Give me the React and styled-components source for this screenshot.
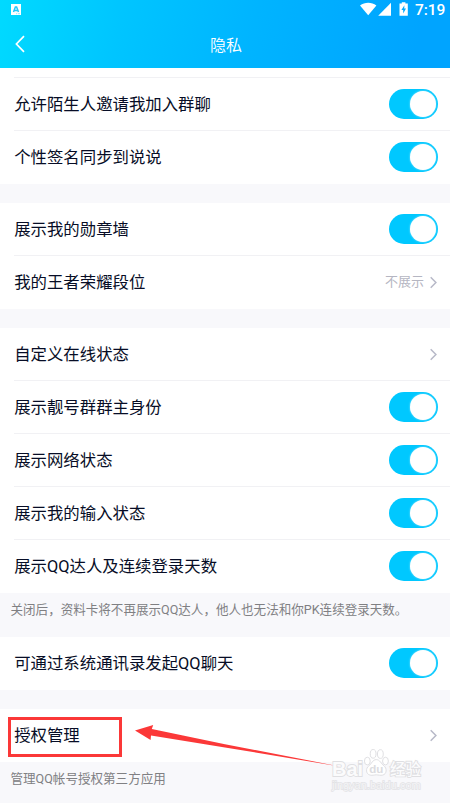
import React from 'react'
import styled, { createGlobalStyle } from 'styled-components'

const groups = [
    {
        continued: true,
        rows: [
            { label: '允许陌生人邀请我加入群聊', toggle: true },
            { label: '个性签名同步到说说', toggle: true },
        ],
    },
    {
        rows: [
            { label: '展示我的勋章墙', toggle: true },
            { label: '我的王者荣耀段位', value: '不展示' },
        ],
    },
    {
        rows: [
            { label: '自定义在线状态' },
            { label: '展示靓号群群主身份', toggle: true },
            { label: '展示网络状态', toggle: true },
            { label: '展示我的输入状态', toggle: true },
            { label: '展示QQ达人及连续登录天数', toggle: true },
        ],
        note: '关闭后，资料卡将不再展示QQ达人，他人也无法和你PK连续登录天数。',
    },
    { rows: [{ label: '可通过系统通讯录发起QQ聊天', toggle: true }] },
    {
        rows: [{ label: '授权管理', marked: true }],
        note: '管理QQ帐号授权第三方应用',
    },
]

function App() {
    return (
        <Container>
            <GlobalStyle />
            <Header>
                <StatusBar>
                    <svg width="10" height="11" viewBox="0 0 10 11">
                        <path d="M0 0h10v11H0z" fill="#fff" />
                        <path d="M2.5 8 4.4 3h1.2l1.9 5M3.4 6.4h3.2" fill="none" stroke="#22c8fa" strokeWidth="1.5" />
                        <path d="M5 9.7h1.2M7 9.7h2" stroke="#6bdcfc" strokeWidth=".7" />
                    </svg>
                    <StatusIcons>
                        <svg width="49" height="15" viewBox="0 0 49 15" fill="#fff">
                            <path d="M0 4.4C4.8.9 11.6.9 16.4 4.4L8.2 14.3z" />
                            <path d="M31 1.7V14.7H18.2z" />
                            <path d="M39.5 2.4h2.3V1.3h3.6v1.1h2.4v12.3h-8.3z" />
                            <path d="M44.4 4.2 41.4 9h1.8v3.4l2.8-5h-1.8z" fill="#00a9ff" />
                        </svg>
                        <Time>7:19</Time>
                    </StatusIcons>
                </StatusBar>
                <TitleBar>
                    <svg width="11" height="18" viewBox="0 0 11 18">
                        <path d="M10 1.2 2.4 9 10 16.8" fill="none" stroke="#fff" strokeWidth="1.7" />
                    </svg>
                    <Title>隐私</Title>
                </TitleBar>
            </Header>
            <main>
                {groups.map((group, i) => (
                    <React.Fragment key={i}>
                        <Group $continued={group.continued}>
                            {group.rows.map((row) => (
                                <Row key={row.label}>
                                    <Label>
                                        {row.label}
                                        {row.marked && <Marker />}
                                    </Label>
                                    {row.toggle ? (
                                        <Toggle><Knob /></Toggle>
                                    ) : (
                                        <Detail>
                                            <Value>{row.value}</Value>
                                            <svg width="9" height="13" viewBox="0 0 9 13">
                                                <path d="m1.7 1.3 5.2 5.2-5.2 5.2" fill="none" stroke="#b7b9c8" strokeWidth="1.5" />
                                            </svg>
                                        </Detail>
                                    )}
                                </Row>
                            ))}
                        </Group>
                        {group.note ? <Note>{group.note}</Note> : <Gap />}
                    </React.Fragment>
                ))}
            </main>
            <Arrow width="210" height="50" viewBox="0 0 210 50">
                <path d="M0 10.5 18.2 5 16.8 9 90 24.2 206 46.7 90 27.4 16 15.6 15.6 20z" fill="#fb3838" />
            </Arrow>
            <Watermark>
                <Brand>
                    <BrandText>Bai</BrandText>
                    <svg width="27" height="30" viewBox="0 0 28 30" fill="#fff" stroke="#dedee1" strokeWidth="1">
                        <ellipse cx="4.5" cy="13" rx="3" ry="4" />
                        <ellipse cx="10.5" cy="5.5" rx="3" ry="4.5" />
                        <ellipse cx="18" cy="5.7" rx="3" ry="4.5" />
                        <ellipse cx="23.3" cy="13" rx="3" ry="4" />
                        <path d="M13.8 11.5c-4 0-4.6 4.2-7.7 6.4-3.5 2.5-3.4 8.7 1.4 9.7 2.2.5 4.1-.3 6.3-.3s4.3.8 6.5.3c4.6-1 4.8-7.2 1.3-9.8-3.2-2.2-3.8-6.3-7.8-6.3z" />
                        <text x="6.5" y="25" fontFamily="Liberation Sans, sans-serif" fontSize="12" fontWeight="700" fill="#dcdce0" stroke="none">du</text>
                    </svg>
                    <BrandText $chinese>经验</BrandText>
                </Brand>
                <Site>jingyan.baidu.com</Site>
            </Watermark>
        </Container>
    )
}

export default App

const GlobalStyle = createGlobalStyle`
    body {
        margin: 0;
        background: #f8f8fb;
    }
    * {
        box-sizing: border-box;
    }
    svg {
        display: block;
        flex: none;
    }
`

const Container = styled.div`
    position: relative;
    height: 803px;
    overflow: hidden;
    background: #f8f8fb;
    color: #070d26;
    font-family: Roboto, "Noto Sans CJK SC", sans-serif;
`

const Header = styled.header`
    height: 68px;
    color: #fff;
    background: linear-gradient(102deg, #00daff 0%, #00c5ff 27%, #00b4ff 56%, #00a4ff 92%);
`

const StatusBar = styled.div`
    display: flex;
    justify-content: space-between;
    height: 20px;
    padding: 4px 5px 0 11px;
`

const StatusIcons = styled.div`
    display: flex;
    gap: 6px;
    margin-top: -3px;
`

const Time = styled.span`
    font-size: 15.5px;
    line-height: 18px;
    width: 30px;
    white-space: nowrap;
    font-weight: 500;
    letter-spacing: -0.1px;
`

const TitleBar = styled.div`
    display: flex;
    align-items: center;
    height: 48px;
    padding: 0 23px 0 14px;
`

const Title = styled.h1`
    flex: 1;
    margin: 0;
    padding-bottom: 1px;
    font-size: 16px;
    font-weight: 350;
    text-align: center;
`

const Group = styled.section`
    background: #fff;
    ${({ $continued }) => $continued && `
        &::before {
            content: '';
            display: block;
            height: 9px;
            margin-left: 14px;
            border-bottom: 1px solid #f1f1f4;
        }
    `}
`

const Row = styled.div`
    display: flex;
    align-items: center;
    justify-content: space-between;
    height: 53px;
    margin-left: 14px;
    padding-right: 12px;
    border-bottom: 1px solid #f1f1f4;

    &:last-child {
        border-bottom-color: transparent;
    }
`

const Label = styled.span`
    position: relative;
    padding: 2px 0 0 0.2px;
    font-size: 16.4px;
    line-height: 24px;
    white-space: nowrap;
`

const Marker = styled.span`
    position: absolute;
    left: -6px;
    top: -5px;
    width: 114px;
    height: 40px;
    border: 3px solid #fb3838;
`

const Toggle = styled.span`
    display: flex;
    align-items: center;
    justify-content: flex-end;
    width: 49px;
    height: 30px;
    padding-right: 2px;
    border-radius: 15px;
    background: #00c8ff;
`

const Knob = styled.span`
    width: 26px;
    height: 26px;
    border-radius: 50%;
    background: #fff;
    box-shadow: 0 0 2px rgba(255, 255, 255, 0.6);
`

const Detail = styled.span`
    display: flex;
    align-items: center;
    gap: 5px;
`

const Value = styled.span`
    font-size: 13px;
    line-height: 18px;
    color: #b5b6c2;
`

const Gap = styled.div`
    height: 19px;
`

const Note = styled.p`
    height: 44px;
    margin: 0;
    padding: 7px 0 0 10.5px;
    font-size: 12.56px;
    line-height: 20px;
    white-space: nowrap;
    color: #808083;
`

const Arrow = styled.svg`
    position: absolute;
    left: 135px;
    top: 720px;
`

const Watermark = styled.div`
    position: absolute;
    left: 332px;
    top: 748px;
    width: 92px;
`

const Brand = styled.div`
    display: flex;
    align-items: flex-end;
    height: 30px;
`

const BrandText = styled.span`
    width: ${({ $chinese }) => ($chinese ? '32px' : '31px')};
    font-family: "Liberation Sans", "Noto Sans CJK SC", sans-serif;
    font-size: ${({ $chinese }) => ($chinese ? '15.5px' : '20px')};
    font-weight: ${({ $chinese }) => ($chinese ? 500 : 700)};
    line-height: ${({ $chinese }) => ($chinese ? '16px' : '17px')};
    white-space: nowrap;
    color: #fbfbfc;
    -webkit-text-stroke: 1.8px #dfdfe2;
    paint-order: stroke fill;
`

const Site = styled.div`
    padding-top: 1px;
    font-family: "Liberation Sans", sans-serif;
    font-size: 11px;
    line-height: 13px;
    color: #f4f4f6;
    -webkit-text-stroke: 1.4px #e2e2e5;
    paint-order: stroke fill;
`
